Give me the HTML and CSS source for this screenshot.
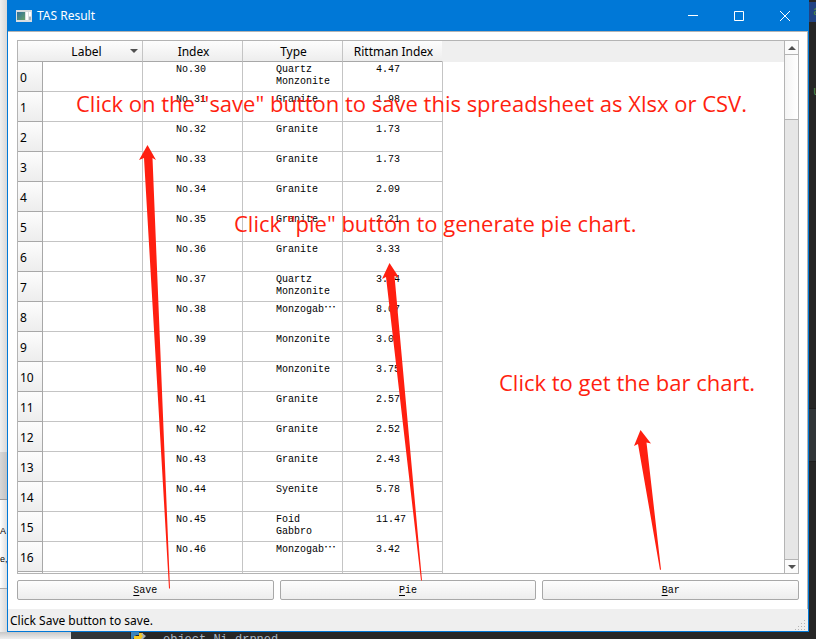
FILE: index.html
```html
<!DOCTYPE html>
<html lang="en">
<head>
<meta charset="utf-8">
<title>TAS Result</title>
<link rel="stylesheet" href="styles.css">
</head>
<body>
<div class="desktop">
  <div class="behind-left" aria-hidden="true">
    <span class="pane pane-top"></span>
    <span class="pane pane-mid"></span>
    <span class="pane pane-list"><span>A</span><span>e,</span></span>
    <span class="pane pane-end"></span>
  </div>

  <main class="window">
    <header class="titlebar">
      <svg class="app-icon" width="16" height="12" viewBox="0 0 16 12">
        <defs><linearGradient id="screen" x2="1" y2="1"><stop offset="0" stop-color="#2d6f9d"/><stop offset="1" stop-color="#67a06a"/></linearGradient></defs>
        <path fill="#d9dde0" d="M0 0h16v12H0z"/>
        <path fill="url(#screen)" d="M1 2h8v8H1z"/>
        <path fill="#fff" d="M10 2h2v8h-2zM13 2h2v4h-2z"/>
        <path fill="#a9b2b8" d="M13 7h2v3h-2z"/>
      </svg>
      <h1>TAS Result</h1>
      <button class="caption" aria-label="Minimize"><svg width="12" height="12"><path d="M1 5.500h10"/></svg></button>
      <button class="caption" aria-label="Maximize"><svg width="12" height="12"><path d="M1.500 1.500h9v9h-9z"/></svg></button>
      <button class="caption" aria-label="Close"><svg width="12" height="12"><path d="M1 1l10 10M11 1L1 11"/></svg></button>
    </header>

    <section class="content">
      <div class="sheet">
        <div class="viewport">
          <table>
            <colgroup><col class="col-row"><col class="col-data"><col class="col-data"><col class="col-data"><col class="col-data"></colgroup>
            <thead><tr><th class="corner"></th><th class="sorted">Label<svg width="8" height="4"><path d="M0 0h8L4 4z"/></svg></th><th>Index</th><th>Type</th><th>Rittman Index</th></tr></thead>
            <tbody>
              <tr><th>0</th><td></td><td>No.30</td><td>Quartz Monzonite</td><td>4.47</td></tr>
              <tr><th>1</th><td></td><td>No.31</td><td>Granite</td><td>1.98</td></tr>
              <tr><th>2</th><td></td><td>No.32</td><td>Granite</td><td>1.73</td></tr>
              <tr><th>3</th><td></td><td>No.33</td><td>Granite</td><td>1.73</td></tr>
              <tr><th>4</th><td></td><td>No.34</td><td>Granite</td><td>2.09</td></tr>
              <tr><th>5</th><td></td><td>No.35</td><td>Granite</td><td>2.21</td></tr>
              <tr><th>6</th><td></td><td>No.36</td><td>Granite</td><td>3.33</td></tr>
              <tr><th>7</th><td></td><td>No.37</td><td>Quartz Monzonite</td><td>3.14</td></tr>
              <tr><th>8</th><td></td><td>No.38</td><td>Monzogab<span class="more" lang="zh-CN">…</span></td><td>8.07</td></tr>
              <tr><th>9</th><td></td><td>No.39</td><td>Monzonite</td><td>3.05</td></tr>
              <tr><th>10</th><td></td><td>No.40</td><td>Monzonite</td><td>3.75</td></tr>
              <tr><th>11</th><td></td><td>No.41</td><td>Granite</td><td>2.57</td></tr>
              <tr><th>12</th><td></td><td>No.42</td><td>Granite</td><td>2.52</td></tr>
              <tr><th>13</th><td></td><td>No.43</td><td>Granite</td><td>2.43</td></tr>
              <tr><th>14</th><td></td><td>No.44</td><td>Syenite</td><td>5.78</td></tr>
              <tr><th>15</th><td></td><td>No.45</td><td>Foid Gabbro</td><td>11.47</td></tr>
              <tr><th>16</th><td></td><td>No.46</td><td>Monzogab<span class="more" lang="zh-CN">…</span></td><td>3.42</td></tr>
              <tr><th></th><td></td><td></td><td></td><td></td></tr>
            </tbody>
          </table>
        </div>
        <div class="scrollbar">
          <button class="step step-up" aria-label="Scroll up"><svg width="8" height="4"><path d="M0 4h8L4 0z"/></svg></button>
          <div class="track"><div class="thumb"></div></div>
          <button class="step step-down" aria-label="Scroll down"><svg width="8" height="4"><path d="M0 0h8L4 4z"/></svg></button>
        </div>
      </div>
      <div class="actions">
        <button><u>S</u>ave</button>
        <button><u>P</u>ie</button>
        <button><u>B</u>ar</button>
      </div>
    </section>

    <footer class="statusbar">
      <span>Click Save button to save.</span>
      <svg class="grip" width="11" height="11" fill="#b4b4b4"><path d="M9 0h1v1H9zM6 3h1v1H6zM9 3h1v1H9zM3 6h1v1H3zM6 6h1v1H6zM9 6h1v1H9zM0 9h1v1H0zM3 9h1v1H3zM6 9h1v1H6zM9 9h1v1H9z"/></svg>
    </footer>
  </main>

  <div class="behind-right" aria-hidden="true">
    <span class="editor-tab">a</span>
    <span class="editor-gap"></span>
    <span class="editor-text">u</span>
    <span class="editor-fill"></span>
    <span class="editor-band"></span>
    <span class="editor-end"></span>
  </div>

  <div class="behind-bottom" aria-hidden="true">
    <span class="light-edge"></span>
    <span class="gutter"></span>
    <svg width="16" height="7"><path fill="#3c83ba" d="M1 0h8v3H6L3 7H1z"/><path fill="#f4c824" d="M9 1h4v6H4V4h5z"/><path fill="#a9b0b5" d="M12 1l4 3-3 3h-2l2-3-2-2z"/></svg>
    <span class="code">object Ni drpned</span>
  </div>

  <p class="note note-save">Click on the "save" button to save this spreadsheet as Xlsx or CSV.</p>
  <p class="note note-pie">Click "pie" button to generate pie chart.</p>
  <p class="note note-bar">Click to get the bar chart.</p>
  <svg class="arrows" width="816" height="639" viewBox="0 0 816 639" aria-hidden="true">
    <path d="M147.500 145L156 160L152.500 158L170 588.500H169L144 158L139 160Z"/>
    <path d="M389.500 263L399 277.500L394.500 276L422 580.500H421L386 277L382 279Z"/>
    <path d="M640.500 430L651 443.500L646.500 442.500L661 569.500L660 570L638 444L634 446Z"/>
  </svg>
</div>
</body>
</html>
```

FILE: styles.css
```css
* { box-sizing: border-box; }

body {
  margin: 0;
  font: 12px/16px "Noto Sans", "Open Sans", sans-serif;
  color: #000;
}

button { font: inherit; color: inherit; padding: 0; margin: 0; }

.desktop {
  position: relative;
  display: grid;
  grid-template: minmax(0, 1fr) 7px / 7px minmax(0, 1fr) 7px;
  height: 100vh;
  overflow: hidden;
  background: #262626;
}

/* Slivers of the windows behind */
.behind-left {
  display: flex;
  flex-direction: column;
  overflow: hidden;
  background: #e6e6e6;
  font: 9px/28px "Liberation Sans", sans-serif;
}
.pane { background: linear-gradient(90deg, #f0f0f0, #d8d8d8); }
.pane-top { flex: 1; }
.pane-mid { height: 48px; background: linear-gradient(90deg, #d8d8d8, #c2c2c2); border-bottom: 1px solid #999; }
.pane-list { height: 89px; padding-top: 17px; border-bottom: 1px solid #aaa; background: linear-gradient(90deg, #fff, #dedede); }
.pane-list span { display: block; }
.pane-end { height: 43px; }

.behind-right {
  display: flex;
  flex-direction: column;
  overflow: hidden;
  padding-top: 2px;
  color: #588a4a;
  font: 12px/20px "Liberation Mono", monospace;
}
.behind-right span { padding-left: 4px; }
.editor-tab { height: 20px; background: #214283; }
.editor-gap { height: 60px; }
.editor-text { height: 20px; }
.editor-fill { flex: 1; }
.editor-band { height: 54px; background: #313538; border-top: 1px solid #1e1e1e; border-bottom: 1px solid #1e1e1e; }
.editor-end { height: 170px; }

.behind-bottom {
  grid-column: 1 / -1;
  display: flex;
  overflow: hidden;
  color: #a9b7c6;
  font: 12px/16px "Liberation Mono", monospace;
}
.light-edge { width: 71px; background: linear-gradient(#c8c8c8, #eee); }
.gutter { width: 59px; background: #313538; }
.code { padding-left: 17px; }

.window {
  display: flex;
  flex-direction: column;
  min-width: 0;
  border: 1px solid #0078d7;
  border-top: 0;
  background: #fff;
}

.titlebar {
  display: flex;
  align-items: center;
  height: 31px;
  padding-left: 8px;
  background: #0078d7;
  color: #fff;
}
.titlebar h1 { flex: 1; margin: 0 0 0 5px; font-size: 12px; font-weight: 400; }
.caption { display: grid; place-items: center; width: 46px; height: 31px; border: 0; background: none; }
.caption svg { fill: none; stroke: #fff; }

.content {
  flex: 1;
  display: flex;
  flex-direction: column;
  gap: 6px;
  min-height: 0;
  padding: 8px 8px 9px 9px;
  border-top: 1px solid #b4b4b4;
  border-right: 1px solid #b4b4b4;
}
.sheet {
  flex: 1;
  display: flex;
  min-height: 0;
  border: 1px solid #b4b4b4;
}
.viewport {
  flex: 1;
  min-width: 0;
  overflow: hidden;
  background: linear-gradient(#efefef 21px, #fff 21px);
}

table { width: 425px; table-layout: fixed; border-collapse: separate; border-spacing: 0; }
.col-row { width: 25px; }
.col-data { width: 100px; }
th, td { padding: 0; border-right: 1px solid #c4c4c4; border-bottom: 1px solid #c4c4c4; }
th { padding-top: 2px; font-weight: 400; background: linear-gradient(#fdfdfd, #ededed); }
thead th { height: 21px; padding-left: 2px; border-bottom-color: #a8a8a8; line-height: 18px; }
thead th:last-child { border-right-color: #efefef; }
thead .corner { border-right: 0; }
.sorted { position: relative; padding-right: 14px; }
.sorted svg { position: absolute; top: 8px; right: 4px; fill: #505050; }
tbody th {
  padding-left: 2px;
  border-color: #a8a8a8;
  text-align: left;
  vertical-align: middle;
}
tbody td {
  height: 30px;
  padding: 2px 5px 3px 33px;
  background: #fff;
  font: 10px/12px "Liberation Mono", monospace;
  vertical-align: top;
}
.more { font: 12px/1px "Noto Sans CJK SC", sans-serif; }

.scrollbar { display: flex; flex-direction: column; width: 14px; border-left: 1px solid #b4b4b4; }
.step { display: grid; place-items: center; height: 14px; border: 0 solid #b4b4b4; background: #fbfbfb; }
.step-up { border-bottom-width: 1px; }
.step-down { border-top-width: 1px; }
.step svg { fill: #505050; }
.track { flex: 1; background: #e6e6e6; }
.thumb { height: 65px; border-bottom: 1px solid #b4b4b4; background: linear-gradient(90deg, #f4f4f4, #fff); }

.actions { display: grid; grid-template-columns: repeat(3, 1fr); gap: 6px; }
.actions button {
  height: 20px;
  padding-top: 2px;
  border: 1px solid #a8a8a8;
  border-radius: 2px;
  background: linear-gradient(#fdfdfd, #ededed);
  font: 10px/16px "Liberation Mono", monospace;
}
.actions u { text-underline-offset: 2px; }

.statusbar {
  display: flex;
  align-items: center;
  justify-content: space-between;
  height: 22px;
  padding: 2px 2px 0;
  background: #efefef;
}
.grip { align-self: flex-end; }

/* Annotations drawn over the window */
.note {
  position: absolute;
  margin: 0;
  color: #ff1f10;
  font: 22px/28px "Open Sans", "Noto Sans", sans-serif;
  white-space: nowrap;
}
.note-save { left: 76px; top: 89px; }
.note-pie { left: 234px; top: 209px; }
.note-bar { left: 499px; top: 368px; }
.arrows { position: absolute; left: 0; top: 0; fill: #ff1f10; pointer-events: none; }
```
